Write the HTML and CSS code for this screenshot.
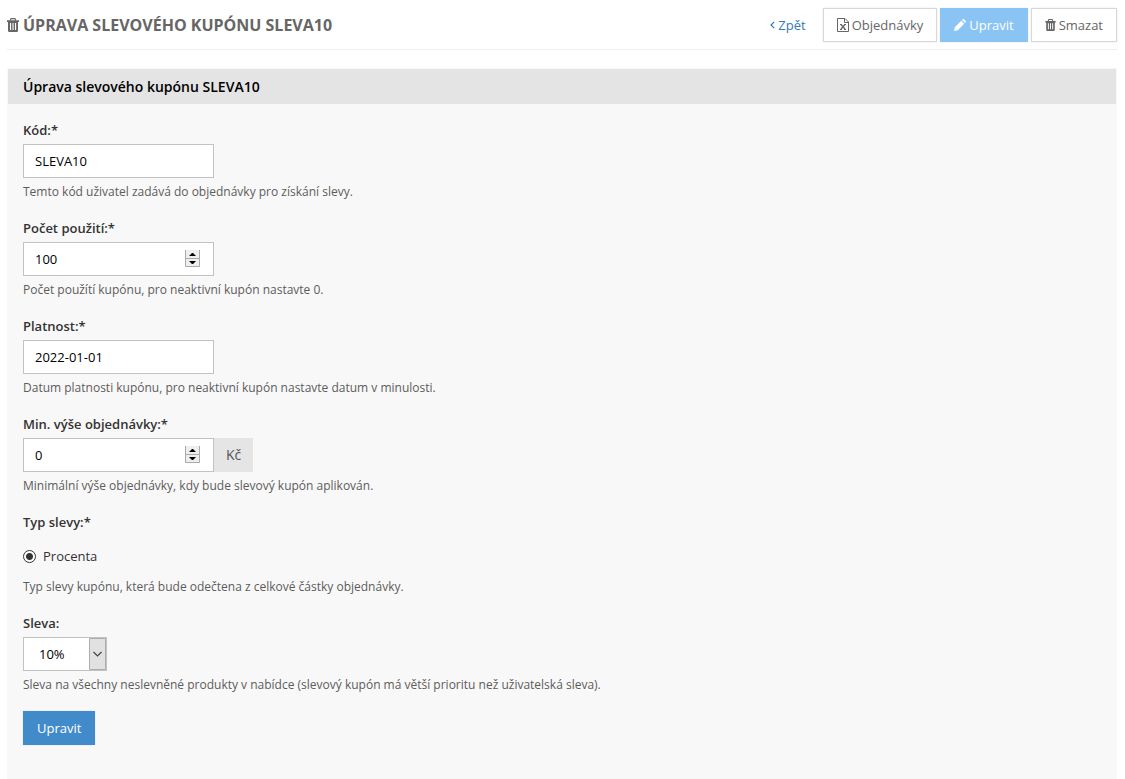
FILE: index.html
```html
<!DOCTYPE html>
<html lang="cs">
<head>
    <meta charset="UTF-8">
    <meta name="viewport" content="width=device-width, initial-scale=1.0">
    <title>Úprava slevového kupónu SLEVA10</title>
    <link rel="stylesheet" href="styles.css">
</head>
<body>
    <header class="page-header">
        <h1 class="page-title">
            <svg class="icon" width="12" height="14" viewBox="0 0 12 14" aria-hidden="true">
                <path d="M3.5 2.5V1.5Q3.5 .6 4.4 .6H7.6Q8.5 .6 8.5 1.5V2.5" fill="none" stroke="currentColor" stroke-width="1.2"/>
                <path fill="currentColor" fill-rule="evenodd" d="M0 2.2H12V4H11V12.5Q11 14 9.7 14H2.3Q1 14 1 12.5V4H0ZM3 5V12H4.1V5ZM5.5 5V12H6.6V5ZM8 5V12H9.1V5Z"/>
            </svg>
            Úprava slevového kupónu SLEVA10
        </h1>
        <nav class="actions">
            <a class="back-link" href="#">
                <svg class="icon" width="5" height="8" viewBox="0 0 5 8" aria-hidden="true">
                    <path d="M4.2 .8L1 4L4.2 7.2" fill="none" stroke="currentColor" stroke-width="1.2"/>
                </svg>
                Zpět
            </a>
            <a class="btn btn-default" href="#">
                <svg class="icon" width="12" height="14" viewBox="0 0 12 14" aria-hidden="true">
                    <path d="M.5 .5H8L11.5 4V13.5H.5ZM7.5 .5V4.5H11.5" fill="none" stroke="currentColor"/>
                    <path d="M4 6.5L8 11M8 6.5L4 11" fill="none" stroke="currentColor" stroke-width="1.3"/>
                    <path d="M3 6.5H5M7 6.5H9M3 11.5H5M7 11.5H9" fill="none" stroke="currentColor"/>
                </svg>
                Objednávky
            </a>
            <a class="btn btn-light" href="#">
                <svg class="icon" width="12" height="12" viewBox="0 0 12 12" aria-hidden="true">
                    <path fill="currentColor" d="M0 12L.8 8.2L7.2 1.8L10.2 4.8L3.8 11.2ZM8 1L8.7 .3Q9.4 -.3 10.1 .3L11.7 1.9Q12.3 2.6 11.7 3.3L11 4Z"/>
                </svg>
                Upravit
            </a>
            <button class="btn btn-default" type="button">
                <svg class="icon" width="11" height="12" viewBox="0 0 12 14" aria-hidden="true">
                    <path d="M3.5 2.5V1.5Q3.5 .6 4.4 .6H7.6Q8.5 .6 8.5 1.5V2.5" fill="none" stroke="currentColor" stroke-width="1.2"/>
                    <path fill="currentColor" fill-rule="evenodd" d="M0 2.2H12V4H11V12.5Q11 14 9.7 14H2.3Q1 14 1 12.5V4H0ZM3 5V12H4.1V5ZM5.5 5V12H6.6V5ZM8 5V12H9.1V5Z"/>
                </svg>
                Smazat
            </button>
        </nav>
    </header>

    <main class="panel">
        <h2 class="panel-title">Úprava slevového kupónu SLEVA10</h2>
        <form class="panel-body">
            <div class="form-group">
                <label class="form-label" for="code">Kód:*</label>
                <input class="form-control" type="text" id="code" value="SLEVA10">
                <p class="help">Temto kód uživatel zadává do objednávky pro získání slevy.</p>
            </div>

            <div class="form-group">
                <label class="form-label" for="count">Počet použití:*</label>
                <div class="number">
                    <input class="form-control" type="number" id="count" value="100">
                    <svg class="spinner" width="15" height="17" viewBox="0 0 15 17" aria-hidden="true">
                        <path fill="#eee" d="M0 0H15V17H0Z"/>
                        <path fill="none" stroke="#aaa" d="M.5 0V16.5H14.5V0M0 8.5H15"/>
                        <path d="M4 6L7 3H8L11 6ZM4 11L7 14H8L11 11Z"/>
                    </svg>
                </div>
                <p class="help">Počet použítí kupónu, pro neaktivní kupón nastavte 0.</p>
            </div>

            <div class="form-group">
                <label class="form-label" for="valid">Platnost:*</label>
                <input class="form-control" type="text" id="valid" value="2022-01-01">
                <p class="help">Datum platnosti kupónu, pro neaktivní kupón nastavte datum v minulosti.</p>
            </div>

            <div class="form-group">
                <label class="form-label" for="minimum">Min. výše objednávky:*</label>
                <div class="input-group">
                    <div class="number">
                        <input class="form-control" type="number" id="minimum" value="0">
                        <svg class="spinner" width="15" height="17" viewBox="0 0 15 17" aria-hidden="true">
                            <path fill="#eee" d="M0 0H15V17H0Z"/>
                            <path fill="none" stroke="#aaa" d="M.5 0V16.5H14.5V0M0 8.5H15"/>
                            <path d="M4 6L7 3H8L11 6ZM4 11L7 14H8L11 11Z"/>
                        </svg>
                    </div>
                    <span class="addon">Kč</span>
                </div>
                <p class="help">Minimální výše objednávky, kdy bude slevový kupón aplikován.</p>
            </div>

            <fieldset class="form-group">
                <legend class="form-label">Typ slevy:*</legend>
                <label class="radio" for="percent">
                    <input class="radio-input" type="radio" id="percent" name="type" checked>
                    Procenta
                </label>
                <p class="help">Typ slevy kupónu, která bude odečtena z celkové částky objednávky.</p>
            </fieldset>

            <div class="form-group">
                <label class="form-label" for="discount">Sleva:</label>
                <div class="select">
                    <select class="form-control select-input" id="discount">
                        <option selected>10%</option>
                    </select>
                    <svg class="select-arrow" width="17" height="32" viewBox="0 0 17 32" aria-hidden="true">
                        <path fill="#e1e1e1" stroke="#adadad" d="M.5 .5H16.5V31.5H.5Z"/>
                        <path fill="none" stroke="#444" stroke-width="1.2" d="M4.5 14L8.5 18L12.5 14"/>
                    </svg>
                </div>
                <p class="help">Sleva na všechny neslevněné produkty v nabídce (slevový kupón má větší prioritu než uživatelská sleva).</p>
            </div>

            <button class="btn btn-primary" type="submit">Upravit</button>
        </form>
    </main>
</body>
</html>
```

FILE: styles.css
```css
* {
    box-sizing: border-box;
}

body {
    display: flex;
    flex-direction: column;
    min-height: 100vh;
    margin: 0;
    padding: 0 8px 0 7px;
    background-color: white;
    color: #333;
    font-family: "Open Sans", sans-serif;
    font-size: 13px;
    line-height: 20px;
}

h1, h2, p {
    margin: 0;
}

.page-header {
    display: flex;
    flex-wrap: wrap;
    justify-content: space-between;
    align-items: center;
    padding: 8px 0 7px;
    border-bottom: 1px solid #eee;
    margin-bottom: 18px;
}

.page-title {
    display: flex;
    align-items: center;
    gap: 4px;
    color: #666;
    font-size: 16px;
    font-weight: 700;
    text-transform: uppercase;
}

.icon {
    flex: none;
}

.actions {
    display: flex;
    align-items: center;
    gap: 3px;
}

.back-link {
    display: flex;
    align-items: center;
    gap: 3px;
    margin-right: 14px;
    color: #337ab7;
    text-decoration: none;
}

.btn {
    display: inline-flex;
    align-items: center;
    gap: 3px;
    height: 34px;
    padding: 0 13px;
    border: 1px solid transparent;
    font-family: inherit;
    font-size: 13px;
    line-height: 20px;
    text-decoration: none;
    box-shadow: 0 0 2px rgba(0, 0, 0, 0.1);
    cursor: pointer;
}

.btn-default {
    border-color: #d8d8d8;
    background-color: white;
    color: #666;
}

.btn-light {
    background-color: #89c4f4;
    color: white;
}

.btn-primary {
    background-color: #428bca;
    color: white;
}

.panel {
    flex: 1;
    border: 1px solid #f8f8f8;
    background-color: #f8f8f8;
}

.panel-title {
    padding: 8px 15px 7px;
    background-color: #e4e4e4;
    color: black;
    font-size: 14px;
    font-weight: 600;
}

.panel-body {
    padding: 16px 15px 32px;
}

.form-group {
    min-width: 0;
    margin: 0 0 17px;
    padding: 0;
    border: 0;
}

.form-label {
    display: block;
    margin-bottom: 4px;
    padding: 0;
    font-weight: 600;
}

.form-control {
    display: block;
    width: 191px;
    height: 34px;
    padding: 0 11px;
    border: 1px solid #c2c2c2;
    border-radius: 0;
    background-color: white;
    color: black;
    font-family: inherit;
    font-size: 13px;
    appearance: none;
}

.form-control[type="number"] {
    appearance: textfield;
}

.help {
    margin-top: 5px;
    color: #5c5c5c;
    font-size: 12px;
    line-height: 18px;
}

.number, .select {
    position: relative;
    width: fit-content;
}

.spinner {
    position: absolute;
    top: 8px;
    right: 14px;
    pointer-events: none;
}

.input-group {
    display: flex;
}

.addon {
    display: flex;
    align-items: center;
    padding: 0 12px;
    background-color: #e5e5e5;
    color: #555;
    font-size: 14px;
}

.radio {
    display: flex;
    align-items: center;
    gap: 7px;
    width: fit-content;
    padding: 10px 0 7px;
}

.radio-input {
    width: 13px;
    height: 13px;
    margin: 0;
    border: 1px solid #333;
    border-radius: 50%;
    background: radial-gradient(circle, #333 3px, white 4px);
    appearance: none;
}

.select-input {
    width: 84px;
    padding: 0 15px;
}

.select-arrow {
    position: absolute;
    top: 1px;
    right: 1px;
    pointer-events: none;
}
```
